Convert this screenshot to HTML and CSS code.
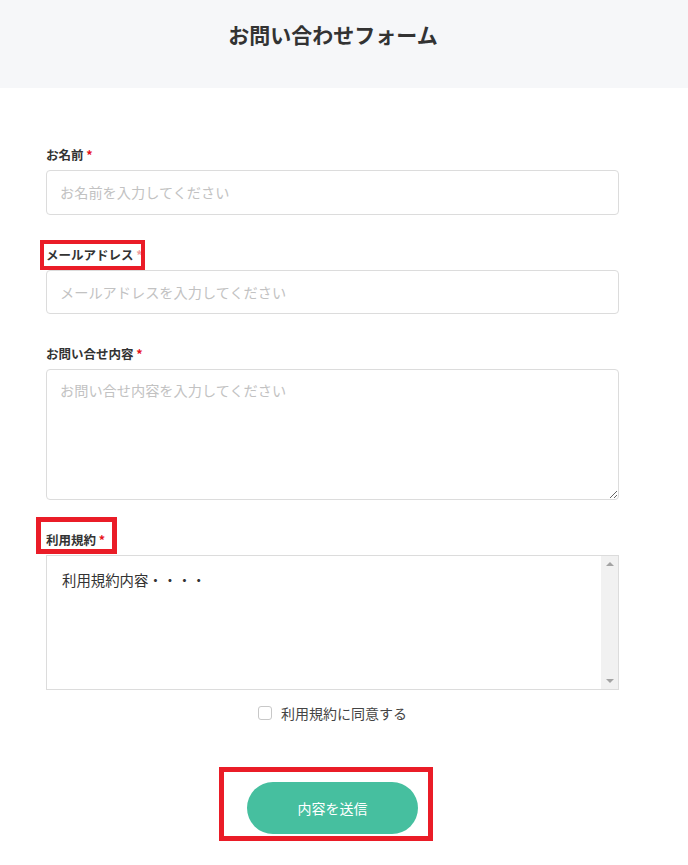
FILE: index.html
```html
<!DOCTYPE html>
<html lang="ja">
<head>
<meta charset="utf-8">
<link rel="stylesheet" href="styles.css">
</head>
<body>
<header class="page-header">
  <h1 class="page-title">お問い合わせフォーム</h1>
</header>
<form class="form">
  <div class="field">
    <label class="label">お名前 <span class="req">*</span></label>
    <input class="input" type="text" placeholder="お名前を入力してください">
  </div>
  <div class="field">
    <label class="label"><span class="mark mark-email"></span>メールアドレス <span class="req faint">*</span></label>
    <input class="input" type="text" placeholder="メールアドレスを入力してください">
  </div>
  <div class="field">
    <label class="label">お問い合せ内容 <span class="req">*</span></label>
    <textarea class="textarea" placeholder="お問い合せ内容を入力してください"></textarea>
  </div>
  <div class="field">
    <label class="label"><span class="mark mark-terms"></span>利用規約 <span class="req">*</span></label>
    <div class="terms">
      <div class="terms-body">利用規約内容・・・・</div>
      <div class="scrollbar">
        <span class="arrow up"></span>
        <span class="arrow down"></span>
      </div>
    </div>
  </div>
  <div class="agree">
    <span class="checkbox"></span>
    <span class="agree-text">利用規約に同意する</span>
  </div>
  <div class="submit-row">
    <div class="submit-wrap">
      <span class="mark mark-button"></span>
      <button type="button" class="submit">内容を送信</button>
    </div>
  </div>
</form>
</body>
</html>
```
FILE: styles.css
```css
* { box-sizing: border-box; }
html, body {
  margin: 0;
  padding: 0;
  background: #fff;
  font-family: "Noto Sans CJK JP", "Noto Sans", sans-serif;
  color: #333;
}
.page-header {
  height: 88px;
  background: #f6f7f9;
  display: flex;
  justify-content: center;
  padding-top: 18px;
  padding-right: 22px;
}
.page-title {
  margin: 0;
  font-size: 21px;
  line-height: 32px;
  font-weight: 700;
  color: #333;
}
.form {
  margin: 0 0 0 46px;
  width: 573px;
  padding-top: 57px;
  padding-bottom: 40px;
  display: flex;
  flex-direction: column;
}
.field {
  display: flex;
  flex-direction: column;
  margin-bottom: 30px;
}
.label {
  position: relative;
  font-size: 12.5px;
  font-weight: 700;
  line-height: 20px;
  color: #333;
  margin-bottom: 5px;
  align-self: flex-start;
}
.req { color: #e8151d; }
.req.faint { color: #f0a0a0; }
.input {
  height: 44.5px;
  border: 1px solid #dcdcdc;
  border-radius: 4px;
  padding: 0 13px;
  font-family: inherit;
  font-size: 14.2px;
  color: #333;
  outline: none;
}
.input::placeholder, .textarea::placeholder { color: #c2c2c2; }
.textarea {
  height: 131px;
  border: 1px solid #dcdcdc;
  border-radius: 4px;
  padding: 9px 13px;
  font-family: inherit;
  font-size: 14.2px;
  line-height: 22px;
  resize: vertical;
  outline: none;
}
.terms {
  height: 135px;
  border: 1px solid #dcdcdc;
  display: flex;
}
.terms-body {
  flex: 1;
  padding: 12px 15px;
  font-size: 14.4px;
  line-height: 24px;
  color: #333;
}
.scrollbar {
  width: 17px;
  background: #f1f1f1;
  display: flex;
  flex-direction: column;
  justify-content: space-between;
  align-items: center;
  padding: 6px 0;
}
.arrow {
  width: 0;
  height: 0;
  border-left: 4px solid transparent;
  border-right: 4px solid transparent;
}
.arrow.up { border-bottom: 4px solid #a3a3a3; }
.arrow.down { border-top: 4px solid #a3a3a3; }
.agree {
  display: flex;
  justify-content: center;
  align-items: center;
  gap: 9px;
  margin-top: -19px;
  height: 24px;
}
.checkbox {
  width: 14px;
  height: 14px;
  border: 1px solid #c8c8c8;
  border-radius: 3px;
  background: #fff;
}
.agree-text {
  font-size: 14px;
  color: #444;
}
.submit-row {
  display: flex;
  justify-content: center;
  margin-top: 57px;
}
.submit-wrap {
  position: relative;
  display: flex;
}
.submit {
  width: 171px;
  height: 52px;
  border: none;
  border-radius: 26px;
  background: #46bf9f;
  color: #fff;
  font-family: inherit;
  font-size: 14px;
  cursor: pointer;
}
.mark {
  position: absolute;
  border: 4px solid #ea1c27;
  pointer-events: none;
}
.mark-email {
  left: -6px;
  top: -5px;
  width: 105px;
  height: 30px;
}
.mark-terms {
  left: -10px;
  top: -13px;
  width: 81px;
  height: 37px;
  border-width: 5px;
}
.mark-button {
  left: -28px;
  right: -15px;
  top: -15px;
  bottom: -7px;
  border-width: 5px;
}
```
